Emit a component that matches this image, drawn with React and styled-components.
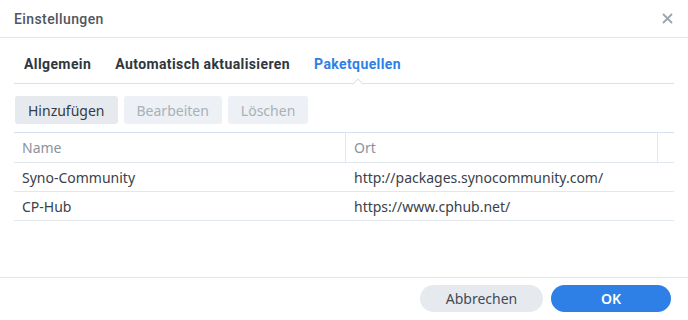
import React from "react";
import styled, { createGlobalStyle } from "styled-components";

const Global = createGlobalStyle`
    html, body {
        margin: 0;
        padding: 0;
        background: #ffffff;
    }
    * {
        box-sizing: border-box;
    }
`;

const Dialog = styled.div`
    width: 688px;
    height: 320px;
    display: flex;
    flex-direction: column;
    background: #ffffff;
    font-family: "Noto Sans", "Open Sans", sans-serif;
    color: #414b55;
`;

const Header = styled.div`
    height: 38px;
    display: flex;
    align-items: center;
    justify-content: space-between;
    padding: 0 14px;
    border-bottom: 1px solid #e4e7ec;
`;

const Title = styled.div`
    font-family: Roboto, sans-serif;
    font-weight: 500;
    font-size: 14px;
    letter-spacing: 0.4px;
    color: #4f5661;
`;

const Close = styled.button`
    border: none;
    background: none;
    padding: 0;
    width: 14px;
    height: 14px;
    display: flex;
    align-items: center;
    justify-content: center;
    cursor: pointer;
`;

const Body = styled.div`
    flex: 1;
    padding: 0 14px;
    display: flex;
    flex-direction: column;
`;

const Tabs = styled.div`
    height: 46px;
    display: flex;
    align-items: center;
    gap: 24px;
    padding: 0 10px;
    border-bottom: 1px solid #dde2e8;
`;

const Tab = styled.div`
    position: relative;
    height: 100%;
    display: flex;
    align-items: center;
    padding-top: 6px;
    font-family: Roboto, sans-serif;
    font-weight: 700;
    font-size: 14px;
    letter-spacing: 0.4px;
    color: ${p => (p.$active ? "#2f80e6" : "#2f3640")};
`;

const Notch = styled.span`
    position: absolute;
    bottom: -1px;
    left: 50%;
    width: 8px;
    height: 8px;
    margin-left: -4px;
    transform: translateY(4px) rotate(45deg);
    background: #ffffff;
    border-left: 1px solid #dde2e8;
    border-top: 1px solid #dde2e8;
`;

const Toolbar = styled.div`
    display: flex;
    gap: 6px;
    margin-top: 12px;
    margin-left: 1px;
`;

const ToolButton = styled.button`
    height: 28px;
    padding: 0 13px;
    border: none;
    border-radius: 3px;
    background: ${p => (p.$disabled ? "#edf0f4" : "#e6eaef")};
    color: ${p => (p.$disabled ? "#a9b0b9" : "#343b45")};
    font-family: "Noto Sans", sans-serif;
    font-size: 14px;
    cursor: ${p => (p.$disabled ? "default" : "pointer")};
`;

const Table = styled.div`
    margin-top: 8px;
    border-top: 1px solid #d6e1ec;
`;

const Row = styled.div`
    display: grid;
    grid-template-columns: 332px 312px 16px;
    height: ${p => (p.$head ? 30 : 29)}px;
    border-bottom: 1px solid #e2e7ed;
`;

const Cell = styled.div`
    display: flex;
    align-items: center;
    padding-left: 8px;
    font-size: 14px;
    color: ${p => (p.$head ? "#8a939d" : "#3a414a")};
    border-right: ${p => (p.$divider ? "1px solid #e2e9f1" : "none")};
`;

const Footer = styled.div`
    height: 43px;
    border-top: 1px solid #e4e7ec;
    display: flex;
    align-items: center;
    justify-content: flex-end;
    gap: 8px;
    padding: 0 17px 1px 0;
`;

const PillButton = styled.button`
    height: 27px;
    width: ${p => p.$w}px;
    border: none;
    border-radius: 14px;
    background: ${p => (p.$primary ? "#2f80e6" : "#e6eaef")};
    color: ${p => (p.$primary ? "#ffffff" : "#414b55")};
    font-family: "Noto Sans", sans-serif;
    font-size: 14px;
    font-weight: ${p => (p.$primary ? 600 : 400)};
    cursor: pointer;
`;

const sources = [
    { name: "Syno-Community", url: "http://packages.synocommunity.com/" },
    { name: "CP-Hub", url: "https://www.cphub.net/" },
];

const App = () => {
    return (
        <Dialog>
            <Global />
            <Header>
                <Title>Einstellungen</Title>
                <Close aria-label="Schließen">
                    <svg width="11" height="11" viewBox="0 0 11 11">
                        <path d="M1.5 1.5 L9.5 9.5 M9.5 1.5 L1.5 9.5" stroke="#9ea4ac" strokeWidth="1.8" strokeLinecap="round" />
                    </svg>
                </Close>
            </Header>
            <Body>
                <Tabs>
                    <Tab>Allgemein</Tab>
                    <Tab>Automatisch aktualisieren</Tab>
                    <Tab $active>
                        Paketquellen
                        <Notch />
                    </Tab>
                </Tabs>
                <Toolbar>
                    <ToolButton>Hinzufügen</ToolButton>
                    <ToolButton $disabled>Bearbeiten</ToolButton>
                    <ToolButton $disabled>Löschen</ToolButton>
                </Toolbar>
                <Table>
                    <Row $head>
                        <Cell $head $divider>Name</Cell>
                        <Cell $head $divider>Ort</Cell>
                        <Cell $head />
                    </Row>
                    {sources.map(s => (
                        <Row key={s.name}>
                            <Cell>{s.name}</Cell>
                            <Cell>{s.url}</Cell>
                            <Cell />
                        </Row>
                    ))}
                </Table>
            </Body>
            <Footer>
                <PillButton $w={123}>Abbrechen</PillButton>
                <PillButton $w={120} $primary>OK</PillButton>
            </Footer>
        </Dialog>
    );
};

export default App;
